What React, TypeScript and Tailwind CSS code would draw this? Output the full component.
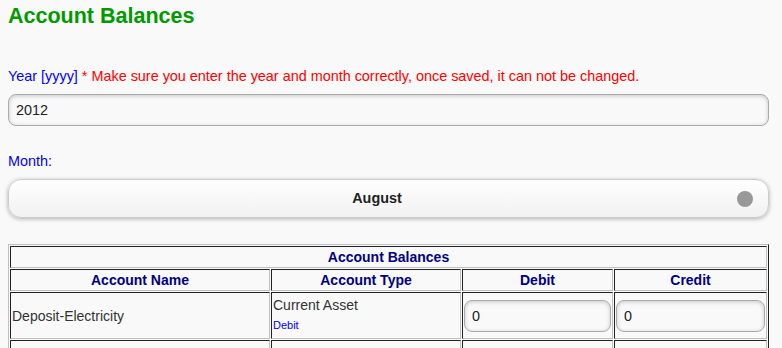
const cell =
  "border border-t-[#222] border-l-[#222] border-r-[#c0c0c0] border-b-[#c0c0c0]";

const App = () => (
  <div className="min-h-[348px] w-full bg-[#f9f9f9] pl-2 pr-[13px] pt-[3px] font-['Liberation_Sans',Arial,sans-serif] text-[14px] text-[#333]">
    <h2 className="text-[21.5px] font-bold leading-[26px] text-[#009900]">Account Balances</h2>
    <div className="mt-[38px] text-[14.4px] leading-[18px]">
      <span className="text-[#0000ff]">Year [yyyy] </span>
      <span className="text-[#ff0000]">
        * Make sure you enter the year and month correctly, once saved, it can not be changed.
      </span>
    </div>
    <input
      className="mt-[9px] block h-[32px] w-full rounded-[8px] border border-[#aaa] bg-[#f9f9f9] px-[7px] text-[14.4px] text-[#222] shadow-[inset_0_1px_4px_rgba(0,0,0,0.2)] outline-none"
      type="text"
      defaultValue="2012"
    />
    <div className="mt-[26px] text-[14.4px] leading-[18px] text-[#0000ff]">Month:</div>
    <div className="relative mt-[9px] flex h-[39px] items-center justify-center rounded-[13px] border border-[#ccc] bg-gradient-to-b from-white to-[#f1f1f1] pl-[15px] pr-[38px] shadow-[0_1px_4px_rgba(0,0,0,0.3)]">
      <span className="text-[14.4px] font-bold text-[#222]">August</span>
      <span className="absolute right-[15px] top-[11px] h-[16px] w-[16px] rounded-full bg-[#999]" />
    </div>
    <table className="mt-[26px] w-full border-separate border-spacing-[1px] border border-t-[#c0c0c0] border-l-[#c0c0c0] border-r-[#222] border-b-[#222]">
      <tbody>
        <tr>
          <th colSpan={4} className={`${cell} h-[22px] p-0 text-center font-bold leading-[18px] text-[#000080]`}>
            Account Balances
          </th>
        </tr>
        <tr className="text-[#000080]">
          <th className={`${cell} h-[22px] w-[260px] p-0 font-bold leading-[18px]`}>Account Name</th>
          <th className={`${cell} w-[190px] p-0 font-bold leading-[18px]`}>Account Type</th>
          <th className={`${cell} w-[151px] p-0 font-bold leading-[18px]`}>Debit</th>
          <th className={`${cell} w-[153px] p-0 font-bold leading-[18px]`}>Credit</th>
        </tr>
        <tr>
          <td className={`${cell} px-[1px] leading-[18px]`}>Deposit-Electricity</td>
          <td className={`${cell} px-[1px] align-top`}>
            <div className="pt-[3px] leading-[18px]">Current Asset</div>
            <div className="mt-[5px] text-[11px] leading-[13px] text-[#0000ff]">Debit</div>
          </td>
          <td className={`${cell} px-[1px]`}>
            <input
              className="mb-[6px] mt-[7px] block h-[32px] w-full rounded-[8px] border border-[#aaa] bg-[#f9f9f9] px-[7px] text-[14.4px] text-[#222] shadow-[inset_0_1px_4px_rgba(0,0,0,0.2)] outline-none"
              type="text"
              defaultValue="0"
            />
          </td>
          <td className={`${cell} px-[1px]`}>
            <input
              className="mb-[6px] mt-[7px] block h-[32px] w-full rounded-[8px] border border-[#aaa] bg-[#f9f9f9] px-[7px] text-[14.4px] text-[#222] shadow-[inset_0_1px_4px_rgba(0,0,0,0.2)] outline-none"
              type="text"
              defaultValue="0"
            />
          </td>
        </tr>
        <tr>
          <td className={`${cell} h-[40px]`} />
          <td className={cell} />
          <td className={cell} />
          <td className={cell} />
        </tr>
      </tbody>
    </table>
  </div>
);

export default App;
